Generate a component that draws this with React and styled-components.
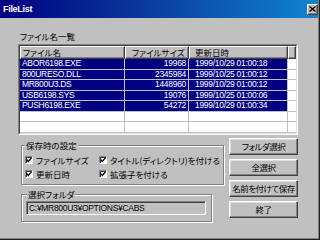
import React from 'react';
import styled, { createGlobalStyle } from 'styled-components';

const Global = createGlobalStyle`
  html, body { margin: 0; padding: 0; background: #c0c0c0; }
  body { width: 320px; height: 240px; overflow: hidden; }
`;

const JP = `"Noto Sans CJK JP", "Noto Sans", sans-serif`;
const LATIN = `"Liberation Sans", Arial, sans-serif`;

const Window = styled.div`
  width: 320px;
  height: 240px;
  box-sizing: border-box;
  background: #c0c0c0;
  display: flex;
  flex-direction: column;
  font-family: ${JP};
  font-feature-settings: "palt";
  color: #000;
  box-shadow: inset -1px -1px 0 #202020, inset -2px -2px 0 #808080;
`;

const TitleBar = styled.div`
  height: 18px;
  margin-right: 2px;
  display: flex;
  align-items: center;
  justify-content: space-between;
  padding: 0 0 0 3px;
  background: linear-gradient(90deg, #000080 0%, #0a3a9c 45%, #1084d0 100%);
`;

const Title = styled.span`
  font-family: ${LATIN};
  font-weight: bold;
  font-size: 9px;
  letter-spacing: -0.3px;
  color: #fff;
`;

const CloseButton = styled.div`
  width: 11px;
  height: 11px;
  box-sizing: border-box;
  background: #c0c0c0;
  border: 1px solid;
  border-color: #fff #404040 #404040 #fff;
  box-shadow: inset -1px -1px 0 #808080;
  display: flex;
  align-items: center;
  justify-content: center;
`;

const Content = styled.div`
  display: flex;
  flex-direction: column;
  padding: 12px 22px 0 18px;
`;

const Caption = styled.div`
  font-size: 8.5px;
  line-height: 12px;
  height: 12px;
  margin-bottom: 2px;
  padding-left: 2px;
`;

const ListFrame = styled.div`
  height: 91px;
  box-sizing: border-box;
  border: 1px solid;
  border-color: #808080 #fff #fff #808080;
`;

const ListInner = styled.div`
  height: 100%;
  box-sizing: border-box;
  border: 1px solid;
  border-color: #404040 #dfdfdf #dfdfdf #404040;
  background: #fff;
  overflow: hidden;
`;

const HeaderRow = styled.div`
  display: flex;
  height: 13px;
`;

const HeaderCell = styled.div`
  box-sizing: border-box;
  width: ${p => (p.$w ? `${p.$w}px` : 'auto')};
  flex: ${p => (p.$w ? '0 0 auto' : '1 1 auto')};
  height: 13px;
  background: #c0c0c0;
  border: 1px solid;
  border-color: #fff #404040 #404040 #fff;
  box-shadow: inset -1px -1px 0 #808080;
  font-size: 8.5px;
  line-height: 11px;
  padding-left: ${p => p.$pad ?? 2}px;
  white-space: nowrap;
  overflow: hidden;
`;

const Row = styled.div`
  display: flex;
  height: 10.5px;
  box-sizing: border-box;
  border-bottom: 1px solid #c0c0c0;
`;

const Cell = styled.div`
  box-sizing: border-box;
  width: ${p => (p.$w ? `${p.$w}px` : 'auto')};
  flex: ${p => (p.$w ? '0 0 auto' : '1 1 auto')};
  border-right: ${p => (p.$w ? '1px solid #c0c0c0' : 'none')};
  background: ${p => (p.$sel ? '#000080' : 'transparent')};
  color: ${p => (p.$sel ? '#fff' : '#000')};
  font-family: ${LATIN};
  font-size: 8.5px;
  letter-spacing: -0.3px;
  line-height: 9.5px;
  text-align: ${p => (p.$right ? 'right' : 'left')};
  padding: ${p => (p.$right ? '0 2px 0 0' : `0 0 0 ${p.$pad ?? 2}px`)};
  white-space: nowrap;
  overflow: hidden;
`;

const Bottom = styled.div`
  display: flex;
  gap: 5px;
  padding-left: 3px;
`;

const LeftCol = styled.div`
  width: 203px;
  display: flex;
  flex-direction: column;
  padding-top: 10px;
`;

const Group = styled.div`
  position: relative;
  box-sizing: border-box;
  width: ${p => p.$w}px;
  border: 1px solid #808080;
  box-shadow: 1px 1px 0 #fff, inset 1px 1px 0 #fff;
  margin-bottom: ${p => p.$mb ?? 0}px;
`;

const GroupLabel = styled.span`
  position: absolute;
  top: -5px;
  left: ${p => p.$left}px;
  padding: 0 1px;
  background: #c0c0c0;
  font-size: 8.5px;
  line-height: 9px;
  white-space: nowrap;
`;

const CheckGrid = styled.div`
  display: grid;
  grid-template-columns: 74px 1fr;
  row-gap: 3px;
  padding: 8px 0 5px 3px;
`;

const CheckItem = styled.div`
  display: flex;
  align-items: center;
  gap: 3px;
  height: 11px;
  font-size: 8.5px;
  white-space: nowrap;
`;

const Box = styled.span`
  width: 8px;
  height: 8px;
  box-sizing: border-box;
  background: #fff;
  border: 1px solid;
  border-color: #808080 #fff #fff #808080;
  box-shadow: inset 1px 1px 0 #404040;
  display: flex;
  align-items: center;
  justify-content: center;
  flex: 0 0 auto;
`;

const FolderGroupBody = styled.div`
  padding: 6px 5px 6px 4px;
`;

const Field = styled.div`
  height: 14px;
  box-sizing: border-box;
  border: 1px solid;
  border-color: #808080 #fff #fff #808080;
  box-shadow: inset 1px 1px 0 #404040;
  background: #c0c0c0;
  font-family: ${LATIN};
  font-size: 8.5px;
  letter-spacing: -0.3px;
  line-height: 12px;
  padding-left: 2px;
  white-space: nowrap;
  overflow: hidden;
`;

const ButtonCol = styled.div`
  width: 69px;
  display: flex;
  flex-direction: column;
  gap: 4px;
  padding-top: 3px;
`;

const Button = styled.div`
  height: 17px;
  box-sizing: border-box;
  border: 1px solid;
  border-color: #fff #404040 #404040 #fff;
  box-shadow: inset -1px -1px 0 #808080, inset 1px 1px 0 #dfdfdf;
  background: #c0c0c0;
  font-size: 8.5px;
  letter-spacing: -0.5px;
  line-height: 15px;
  text-align: center;
  white-space: nowrap;
  overflow: hidden;
`;

const COLS = [105, 64, 99];

const files = [
  { name: 'ABOR6198.EXE', size: '19968', date: '1999/10/29 01:00:18' },
  { name: '800URESO.DLL', size: '2345984', date: '1999/10/25 01:00:12' },
  { name: 'MR800U3.DS', size: '1448960', date: '1999/10/29 01:00:12' },
  { name: 'USB6198.SYS', size: '19076', date: '1999/10/25 01:00:06' },
  { name: 'PUSH6198.EXE', size: '54272', date: '1999/10/29 01:00:34' },
  null,
  null,
];

const Check = () => (
  <svg width="6" height="6" viewBox="0 0 6 6">
    <path d="M0.6 2.6 L2.3 4.4 L5.4 0.9" fill="none" stroke="#000" strokeWidth="1.4" />
  </svg>
);

const CheckBox = ({ children }) => (
  <CheckItem>
    <Box><Check /></Box>
    <span>{children}</span>
  </CheckItem>
);

export default function App() {
  return (
    <>
      <Global />
      <Window>
        <TitleBar>
          <Title>FileList</Title>
          <CloseButton>
            <svg width="7" height="6" viewBox="0 0 7 6">
              <path d="M0.5 0.5 L6.5 5.5 M6.5 0.5 L0.5 5.5" stroke="#000" strokeWidth="1.4" />
            </svg>
          </CloseButton>
        </TitleBar>
        <Content>
          <Caption>ファイル名一覧</Caption>
          <ListFrame>
            <ListInner>
              <HeaderRow>
                <HeaderCell $w={COLS[0]}>ファイル名</HeaderCell>
                <HeaderCell $w={COLS[1]} $pad={6}>ファイルサイズ</HeaderCell>
                <HeaderCell $w={COLS[2]} $pad={5}>更新日時</HeaderCell>
                <HeaderCell />
              </HeaderRow>
              {files.map((f, i) => (
                <Row key={i}>
                  <Cell $w={COLS[0]} $sel={!!f}>{f ? f.name : ''}</Cell>
                  <Cell $w={COLS[1]} $sel={!!f} $right>{f ? f.size : ''}</Cell>
                  <Cell $w={COLS[2]} $sel={!!f} $pad={6}>{f ? f.date : ''}</Cell>
                  <Cell />
                </Row>
              ))}
            </ListInner>
          </ListFrame>
          <Bottom>
            <LeftCol>
              <Group $w={203} $mb={9}>
                <GroupLabel $left={3}>保存時の設定</GroupLabel>
                <CheckGrid>
                  <CheckBox>ファイルサイズ</CheckBox>
                  <CheckBox>タイトル(ディレクトリ)を付ける</CheckBox>
                  <CheckBox>更新日時</CheckBox>
                  <CheckBox>拡張子を付ける</CheckBox>
                </CheckGrid>
              </Group>
              <Group $w={191}>
                <GroupLabel $left={5}>選択フォルダ</GroupLabel>
                <FolderGroupBody>
                  <Field>C:¥MR800U3¥OPTIONS¥CABS</Field>
                </FolderGroupBody>
              </Group>
            </LeftCol>
            <ButtonCol>
              <Button>フォルダ選択</Button>
              <Button>全選択</Button>
              <Button>名前を付けて保存</Button>
              <Button>終了</Button>
            </ButtonCol>
          </Bottom>
        </Content>
      </Window>
    </>
  );
}
